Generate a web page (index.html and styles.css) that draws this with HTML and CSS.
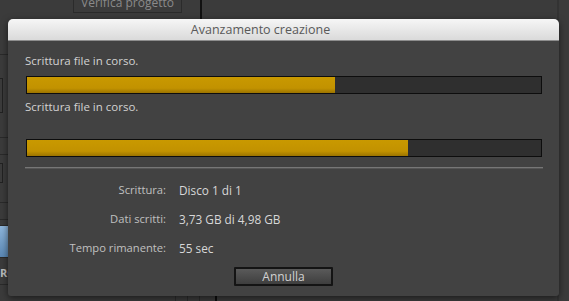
FILE: index.html
```html
<html>
  <head>
    <link rel="stylesheet" href="styles.css">
  </head>
  <body>

    <div class="backdrop">
      <div class="toolbar">
        <div class="verify">Verifica progetto</div>
        <div class="toolbar-split"></div>
      </div>
      <div class="side">
        <div class="side-row r1"></div>
        <div class="side-box b1"></div>
        <div class="side-row r2"></div>
        <div class="side-row r3"></div>
        <div class="side-box b2"></div>
        <div class="side-row r4"></div>
        <div class="side-row r5"></div>
        <div class="side-blue"></div>
        <div class="side-text">RC</div>
      </div>
      <div class="tracks">
        <span class="tick t1"></span>
        <span class="tick t2"></span>
        <span class="tick t3"></span>
        <span class="tick dark"></span>
      </div>
    </div>

    <div class="dialog">
      <div class="dialog-title">Avanzamento creazione</div>
      <div class="dialog-body">
        <div class="status">Scrittura file in corso.</div>
        <div class="bar"><div class="bar-fill" style="width:60%"></div></div>
        <div class="status second">Scrittura file in corso.</div>
        <div class="bar lower"><div class="bar-fill" style="width:74.2%"></div></div>
        <div class="separator"></div>

        <div class="details">
          <div class="label">Scrittura:</div>
          <div class="value">Disco 1 di 1</div>
          <div class="label">Dati scritti:</div>
          <div class="value">3,73 GB di 4,98 GB</div>
          <div class="label">Tempo rimanente:</div>
          <div class="value">55 sec</div>
        </div>

        <div class="actions">
          <button class="cancel">Annulla</button>
        </div>
      </div>
    </div>

  </body>
</html>
```

FILE: styles.css
```css
body {
  margin: 0;
  width: 569px;
  height: 301px;
  overflow: hidden;
  position: relative;
  background: #3b3b3b;
  font-family: 'Open Sans', 'DejaVu Sans', sans-serif;
}

/* background workspace, mostly hidden by the dialog */
.backdrop {
  height: 301px;
  border-right: 2px solid #333;
  width: 557px;
  position: relative;
}

.toolbar {
  height: 19px;
  display: flex;
}
.verify {
  margin-left: 73px;
  margin-top: -6px;
  width: 107px;
  height: 17px;
  border: 1px solid #2b2b2b;
  color: #8a8a8a;
  font-size: 12px;
  line-height: 15px;
  text-align: center;
}
.toolbar-split {
  margin-left: 18px;
  width: 2px;
  height: 20px;
  background: #111;
}

.side {
  width: 60px;
  display: flex;
  flex-direction: column;
}
.side-row {
  border-bottom: 1px solid #2a2a2a;
}
.r1 { height: 35px; }
.r2 { height: 24px; }
.r3 { height: 16px; }
.r4 { height: 19px; }
.r5 { height: 16px; }

.side-box {
  border: 1px solid #222;
  margin-right: 57px;
  margin-left: -10px;
}
.b1 { margin-top: 23px; height: 33px; }
.b2 { margin-top: 8px; height: 18px; }

.side-blue {
  margin-top: 5px;
  height: 31px;
  background: linear-gradient(#8fb6dc, #5a88b4);
  border-top: 1px solid #2a2a2a;
  border-bottom: 1px solid #2a2a2a;
}
.side-text {
  margin-top: 4px;
  height: 22px;
  line-height: 22px;
  color: #bbb;
  font-size: 11px;
  font-weight: bold;
  border-bottom: 1px solid #2a2a2a;
}

.tracks {
  position: absolute;
  left: 0;
  bottom: 0;
  height: 8px;
  width: 100%;
  display: flex;
}
.tick {
  width: 1px;
  height: 8px;
  background: #2c2c2c;
}
.t1 { margin-left: 175px; }
.t2 { margin-left: 11px; }
.t3 { margin-left: 11px; }
.tick.dark {
  margin-left: 15px;
  width: 2px;
  background: #0e0e0e;
}

/* the progress dialog floats over the workspace */
.dialog {
  position: absolute;
  left: 8px;
  top: 19px;
  width: 551px;
  height: 277px;
  background: #424242;
  border-radius: 5px 5px 3px 3px;
  box-shadow: 0 2px 7px rgba(0, 0, 0, 0.55);
  overflow: hidden;
}

.dialog-title {
  height: 21px;
  line-height: 21px;
  padding-right: 46px;
  text-align: center;
  font-size: 12.5px;
  color: #595959;
  background: linear-gradient(#f6f6f6, #dadada);
  border-bottom: 1px solid #8d8d8d;
}

.dialog-body {
  padding: 13px 17px 0 17px;
}

.status {
  height: 14px;
  line-height: 14px;
  font-size: 11.5px;
  color: #d2d2d2;
}
.status.second {
  margin-top: 6px;
}

.bar {
  margin-top: 8px;
  margin-left: 1px;
  width: 514px;
  height: 16px;
  border: 1px solid #0d0d0d;
  background: #2f2f2f;
}
.bar.lower {
  margin-top: 25px;
}
.bar-fill {
  height: 16px;
  background: linear-gradient(#c99900, #c29200 70%, #9c7400);
}

.separator {
  margin-top: 10px;
  width: 518px;
  height: 1px;
  background: #767676;
  border-bottom: 1px solid #555;
}

.details {
  margin-top: 11px;
  display: grid;
  grid-template-columns: 141px 1fr;
  grid-auto-rows: 20px;
  column-gap: 13px;
  row-gap: 9px;
  line-height: 20px;
}
.label {
  text-align: right;
  font-size: 11.2px;
  color: #c0c0c0;
}
.value {
  font-size: 11.8px;
  color: #d8d8d8;
}

.actions {
  margin-top: 9px;
  padding-left: 209px;
}
.cancel {
  width: 99px;
  height: 19px;
  padding: 0;
  border: 2px solid #141414;
  border-radius: 1px;
  background: linear-gradient(#5a5a5a, #3e3e3e);
  color: #d2d2d2;
  font-family: 'Open Sans', 'DejaVu Sans', sans-serif;
  font-size: 12px;
  line-height: 15px;
}
```
